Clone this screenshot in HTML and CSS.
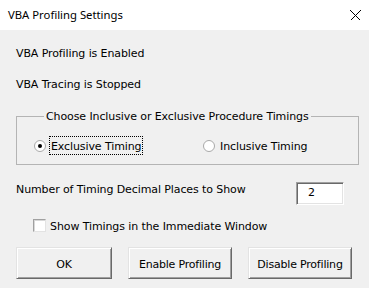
FILE: index.html
```html
<!DOCTYPE html>
<html>
<head>
<meta charset="utf-8">
<link rel="stylesheet" href="styles.css">
</head>
<body>
<div class="window">
  <div class="titlebar">
    <span class="title">VBA Profiling Settings</span>
    <svg class="close" width="11" height="11" viewBox="0 0 11 11"><path d="M0.5 0.5 L10.5 10.5 M10.5 0.5 L0.5 10.5" stroke="#000" stroke-width="1" fill="none"/></svg>
  </div>
  <div class="content">
    <div class="line first">VBA Profiling is Enabled</div>
    <div class="line second">VBA Tracing is Stopped</div>
    <fieldset class="group">
      <legend class="legend">Choose Inclusive or Exclusive Procedure Timings</legend>
      <div class="radios">
        <div class="radio opt1">
          <svg class="radio-icon" width="12" height="12" viewBox="0 0 12 12">
            <circle cx="6" cy="6" r="5.5" fill="#fff" stroke="#a8a8a8"/>
            <circle cx="6" cy="6" r="2" fill="#000"/>
          </svg>
          <span class="radio-label focused">Exclusive Timing</span>
        </div>
        <div class="radio">
          <svg class="radio-icon" width="12" height="12" viewBox="0 0 12 12">
            <circle cx="6" cy="6" r="5.5" fill="#fff" stroke="#a8a8a8"/>
          </svg>
          <span class="radio-label">Inclusive Timing</span>
        </div>
      </div>
    </fieldset>
    <div class="decimals">
      <span class="dec-label">Number of Timing Decimal Places to Show</span>
      <div class="textbox">2</div>
    </div>
    <div class="check-row">
      <span class="checkbox"></span>
      <span class="check-label">Show Timings in the Immediate Window</span>
    </div>
    <div class="buttons">
      <button class="btn btn-ok">OK</button>
      <button class="btn btn-wide">Enable Profiling</button>
      <button class="btn btn-wide">Disable Profiling</button>
    </div>
  </div>
</div>
</body>
</html>
```
FILE: styles.css
```css
html, body {
  margin: 0;
  padding: 0;
  background: #f0f0f0;
}
.window {
  width: 369px;
  height: 288px;
  background: #f0f0f0;
  font-family: "DejaVu Sans", sans-serif;
  font-size: 11px;
  line-height: 13px;
  letter-spacing: -0.1px;
  color: #000;
  overflow: hidden;
}
.titlebar {
  height: 30px;
  box-sizing: border-box;
  background: #fff;
  padding: 7px 0 0 8px;
  display: flex;
  align-items: flex-start;
}
.title {
  font-family: "Noto Sans", sans-serif;
  font-size: 11.3px;
  line-height: 15px;
  letter-spacing: 0;
  flex: 1;
}
.close {
  margin: 3px 8px 0 0;
  shape-rendering: crispEdges;
}
.content {
  padding: 0 10px 0 16px;
  display: flex;
  flex-direction: column;
}
.line {
  height: 13px;
}
.first { margin-top: 17px; }
.second { margin-top: 18px; }
.group {
  margin: 19px 0 0 0;
  padding: 0 0 9px 17px;
  border: 1px solid #b4b4b4;
  min-inline-size: 0;
}
.legend {
  margin-left: 10px;
  padding: 0 2px;
  line-height: 13px;
}
.radios {
  margin-top: 13px;
  display: flex;
  align-items: center;
}
.radio {
  display: flex;
  align-items: center;
}
.opt1 {
  width: 169px;
}
.radio-icon {
  flex: none;
}
.radio-label {
  margin-left: 3px;
  padding: 3px 1px 1px 1px;
  border: 1px solid transparent;
  line-height: 13px;
}
.radio-label.focused {
  border: 1px dotted #000;
}
.decimals {
  margin-top: 17px;
  display: flex;
  align-items: flex-start;
  padding-right: 15px;
}
.dec-label {
  flex: 1;
  padding-top: 1px;
}
.textbox {
  width: 48px;
  height: 23px;
  box-sizing: border-box;
  background: #fff;
  border: 1px solid;
  border-color: #a0a0a0 #fff #fff #a0a0a0;
  box-shadow: inset 1px 1px #696969, inset -1px -1px #e3e3e3;
  padding: 3px 0 0 11px;
}
.check-row {
  margin-top: 14px;
  margin-left: 17px;
  display: flex;
  align-items: flex-start;
}
.checkbox {
  width: 13px;
  height: 13px;
  box-sizing: border-box;
  background: #fff;
  border: 1px solid;
  border-color: #a0a0a0 #e3e3e3 #e3e3e3 #a0a0a0;
  box-shadow: inset 1px 1px #d8d8d8;
}
.check-label {
  margin-left: 4px;
  padding-top: 1px;
}
.buttons {
  margin-top: 14px;
  display: flex;
  gap: 16px;
}
.btn {
  height: 32px;
  box-sizing: border-box;
  margin: 0;
  padding: 2px 0 0 0;
  font: inherit;
  letter-spacing: -0.2px;
  color: #000;
  background: #f0f0f0;
  border: 1px solid;
  border-color: #e3e3e3 #696969 #696969 #e3e3e3;
  box-shadow: inset 1px 1px #fff, inset -1px -1px #a0a0a0;
  border-radius: 0;
}
.btn-ok { width: 96px; }
.btn-wide { width: 104px; }
```
